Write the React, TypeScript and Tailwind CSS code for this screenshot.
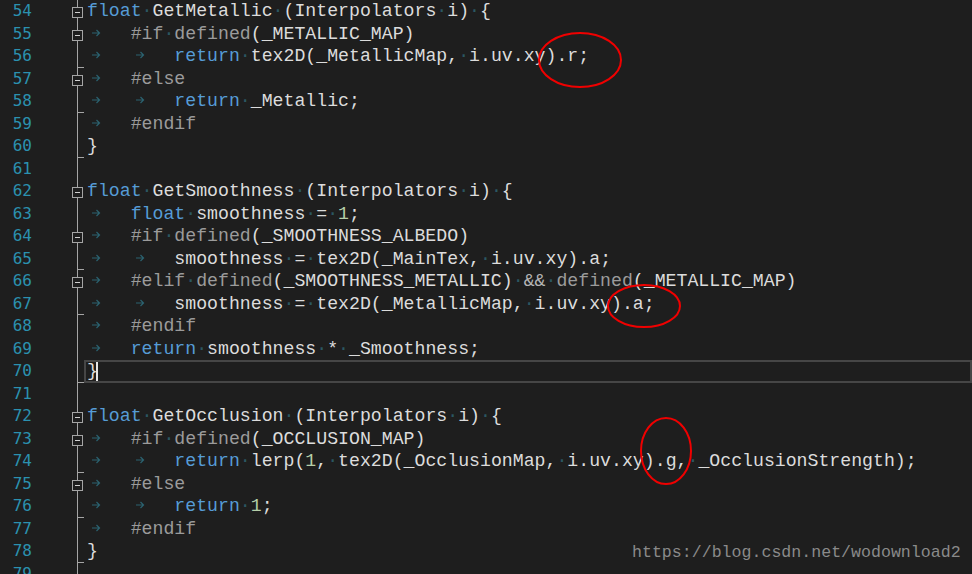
import React from 'react';

const lines: string[] = [
    'float GetMetallic (Interpolators i) {',
    '\t#if defined(_METALLIC_MAP)',
    '\t\treturn tex2D(_MetallicMap, i.uv.xy).r;',
    '\t#else',
    '\t\treturn _Metallic;',
    '\t#endif',
    '}',
    '',
    'float GetSmoothness (Interpolators i) {',
    '\tfloat smoothness = 1;',
    '\t#if defined(_SMOOTHNESS_ALBEDO)',
    '\t\tsmoothness = tex2D(_MainTex, i.uv.xy).a;',
    '\t#elif defined(_SMOOTHNESS_METALLIC) && defined(_METALLIC_MAP)',
    '\t\tsmoothness = tex2D(_MetallicMap, i.uv.xy).a;',
    '\t#endif',
    '\treturn smoothness * _Smoothness;',
    '}',
    '',
    'float GetOcclusion (Interpolators i) {',
    '\t#if defined(_OCCLUSION_MAP)',
    '\t\treturn lerp(1, tex2D(_OcclusionMap, i.uv.xy).g, _OcclusionStrength);',
    '\t#else',
    '\t\treturn 1;',
    '\t#endif',
    '}',
    '',
];

const FIRST = 54;
const foldBoxes = [54, 55, 57, 62, 64, 66, 72, 73, 75];
const foldEnds = [56, 58, 60, 65, 67, 70, 74, 76, 78];
const CURRENT = 70;

function tokenClass(tok: string) {
    if (tok === 'float' || tok === 'return') return 'text-[#569cd6]';
    if (tok.startsWith('#') || tok === 'defined') return 'text-[#9b9b9b]';
    if (/^\d+$/.test(tok)) return 'text-[#b5cea8]';
    if (tok === '&&') return 'text-[#b4b4b4]';
    return 'text-[#dcdcdc]';
}

function TabArrow() {
    return (
        <span className="inline-block w-[1ch] h-[10px]">
            <svg width="10" height="8" viewBox="0 0 10 8" className="ml-[4px]">
                <path d="M1 4H8.5M5.5 1L8.5 4L5.5 7" fill="none" stroke="#2b6270" strokeWidth="1.2" />
            </svg>
        </span>
    );
}

function CodeLine({ src }: { src: string }) {
    const toks = src.match(/\t| |#\w+|\w+|&&|[^\w\s]/g) ?? [];
    return (
        <>
            {toks.map((t, i) => {
                if (t === '\t') {
                    return (
                        <span key={i}>
                            <TabArrow />
                            {'   '}
                        </span>
                    );
                }
                if (t === ' ') {
                    return (
                        <span key={i} className="text-[#2b5762]">
                            ·
                        </span>
                    );
                }
                return (
                    <span key={i} className={tokenClass(t)}>
                        {t}
                    </span>
                );
            })}
        </>
    );
}

export default function App() {
    return (
        <div className="relative w-[972px] h-[574px] overflow-hidden bg-[#1e1e1e] flex">
            {/* line numbers */}
            <div className="w-[32px] flex flex-col text-right text-[#2b91af] text-[16px] font-['DejaVu_Sans_Mono',monospace]">
                {lines.map((_, i) => (
                    <div key={i} className="h-[22.5px] leading-[22.5px] shrink-0">
                        {FIRST + i}
                    </div>
                ))}
            </div>

            {/* fold margin */}
            <div className="w-[52px] flex flex-col">
                {lines.map((_, i) => {
                    const n = FIRST + i;
                    return (
                        <div key={i} className="relative h-[22.5px] shrink-0">
                            <div className="absolute left-[45px] top-0 bottom-0 w-px bg-[#a5a5a5]" />
                            {foldEnds.includes(n) && (
                                <div className="absolute left-[45px] bottom-0 w-[7px] h-px bg-[#a5a5a5]" />
                            )}
                            {foldBoxes.includes(n) && (
                                <div className="absolute left-[40px] top-[7px] w-[11px] h-[11px] border border-[#a5a5a5] bg-[#1e1e1e] flex items-center justify-center">
                                    <div className="w-[5px] h-px bg-[#d0d0d0]" />
                                </div>
                            )}
                        </div>
                    );
                })}
            </div>

            {/* code */}
            <div className="flex-1 flex flex-col text-[18.2px] font-['Liberation_Mono',monospace] whitespace-pre">
                {lines.map((l, i) => {
                    const n = FIRST + i;
                    const current = n === CURRENT;
                    return (
                        <div
                            key={i}
                            className={
                                'h-[22.5px] leading-[22.5px] shrink-0 pl-[3px] ' +
                                (current ? 'shadow-[inset_0_0_0_2px_#464646]' : '')
                            }
                        >
                            <CodeLine src={l} />
                            {current && (
                                <span className="inline-block align-middle -ml-[2px] w-[2px] h-[19px] bg-[#e6e6e6]" />
                            )}
                        </div>
                    );
                })}
            </div>

            {/* annotations */}
            <svg className="absolute inset-0 pointer-events-none" width="972" height="574">
                <ellipse cx="580" cy="60" rx="41" ry="27" fill="none" stroke="#f00000" strokeWidth="2" />
                <ellipse cx="644" cy="306" rx="36" ry="21" fill="none" stroke="#f00000" strokeWidth="2" />
                <ellipse cx="666" cy="451" rx="25" ry="33" fill="none" stroke="#f00000" strokeWidth="2" />
            </svg>

            <div className="absolute left-[632px] top-[541px] text-[16.6px] leading-[24px] text-[#8a8a8a] font-['Liberation_Mono',monospace]">
                https://blog.csdn.net/wodownload2
            </div>
        </div>
    );
}
